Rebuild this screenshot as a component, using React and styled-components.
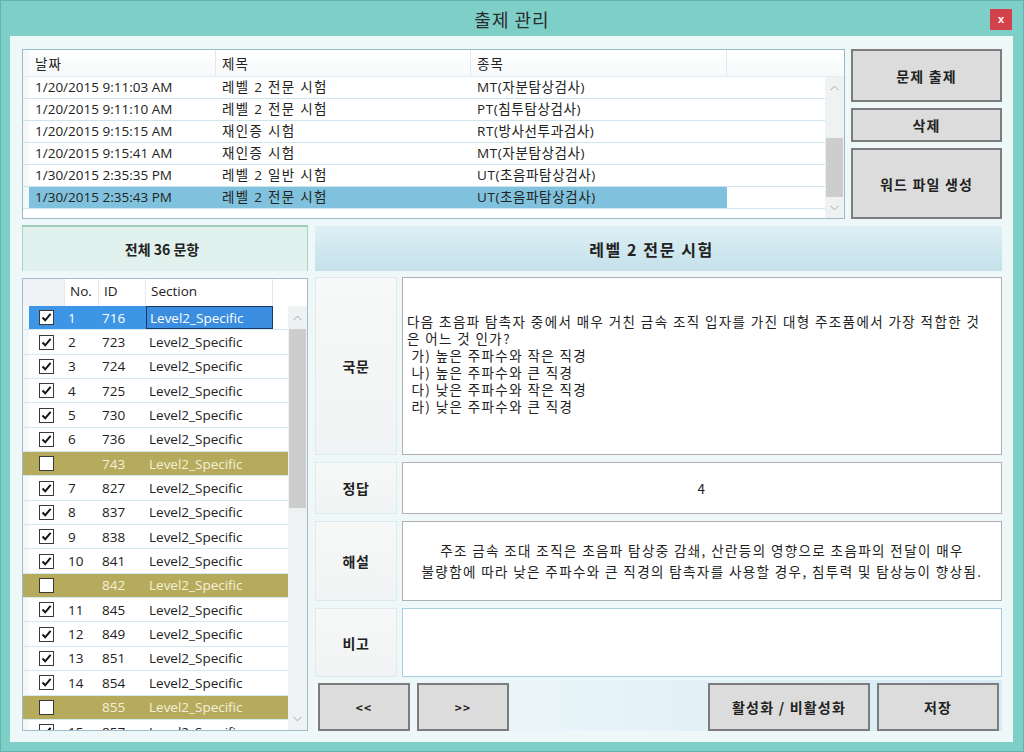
import styled, { createGlobalStyle } from "styled-components";

const exams = [
  { date: "1/20/2015 9:11:03 AM", title: "레벨 2 전문 시험", kind: "MT(자분탐상검사)" },
  { date: "1/20/2015 9:11:10 AM", title: "레벨 2 전문 시험", kind: "PT(침투탐상검사)" },
  { date: "1/20/2015 9:15:15 AM", title: "재인증 시험", kind: "RT(방사선투과검사)" },
  { date: "1/20/2015 9:15:41 AM", title: "재인증 시험", kind: "MT(자분탐상검사)" },
  { date: "1/30/2015 2:35:35 PM", title: "레벨 2 일반 시험", kind: "UT(초음파탐상검사)" },
  { date: "1/30/2015 2:35:43 PM", title: "레벨 2 전문 시험", kind: "UT(초음파탐상검사)", selected: true },
];

const questions = [
  { no: "1", id: "716", on: true, selected: true },
  { no: "2", id: "723", on: true },
  { no: "3", id: "724", on: true },
  { no: "4", id: "725", on: true },
  { no: "5", id: "730", on: true },
  { no: "6", id: "736", on: true },
  { no: "", id: "743", on: false },
  { no: "7", id: "827", on: true },
  { no: "8", id: "837", on: true },
  { no: "9", id: "838", on: true },
  { no: "10", id: "841", on: true },
  { no: "", id: "842", on: false },
  { no: "11", id: "845", on: true },
  { no: "12", id: "849", on: true },
  { no: "13", id: "851", on: true },
  { no: "14", id: "854", on: true },
  { no: "", id: "855", on: false },
  { no: "15", id: "857", on: true },
];

const questionLines = [
  "다음 초음파 탐촉자 중에서 매우 거친 금속 조직 입자를 가진 대형 주조품에서 가장 적합한 것",
  "은 어느 것 인가?",
  " 가) 높은 주파수와 작은 직경",
  " 나) 높은 주파수와 큰 직경",
  " 다) 낮은 주파수와 작은 직경",
  " 라) 낮은 주파수와 큰 직경",
];

const explainLines = [
  "주조 금속 조대 조직은 초음파 탐상중 감쇄, 산란등의 영향으로 초음파의 전달이 매우",
  "불량함에 따라 낮은 주파수와 큰 직경의 탐촉자를 사용할 경우, 침투력 및 탐상능이 향상됨.",
];

const App = () => {
  return (
    <Window>
      <GlobalStyle />
      <TitleBar>
        <span />
        <Title>출제 관리</Title>
        <CloseBtn>x</CloseBtn>
      </TitleBar>

      <Body>
        {/* top: exam list + action buttons */}
        <Top>
          <ExamList>
            <ExamHead>
              <Strip />
              <HeadCell w={187}>날짜</HeadCell>
              <HeadCell w={255}>제목</HeadCell>
              <HeadCell w={256}>종목</HeadCell>
              <HeadFill />
            </ExamHead>
            <ListBody>
              <Rows>
                {exams.map((e) => (
                  <ExamRow key={e.date}>
                    <Strip />
                    <ExamCell w={187} sel={e.selected}>{e.date}</ExamCell>
                    <ExamCell w={255} sel={e.selected} ls={1.3}>{e.title}</ExamCell>
                    <ExamCell w={256} sel={e.selected} ls={0.6}>{e.kind}</ExamCell>
                    <ExamFill />
                  </ExamRow>
                ))}
              </Rows>
              <ScrollBar>
                <Arrow h={22}><Chevron /></Arrow>
                <Track>
                  <Thumb top={39} h={59} />
                </Track>
                <Arrow h={20}><Chevron down /></Arrow>
              </ScrollBar>
            </ListBody>
          </ExamList>

          <SideButtons>
            <GrayButton h={53}>문제 출제</GrayButton>
            <GrayButton h={34}>삭제</GrayButton>
            <GrayButton h={71}>워드 파일 생성</GrayButton>
          </SideButtons>
        </Top>

        <Bottom>
          {/* left: question grid */}
          <LeftCol>
            <CountTab>전체 36 문항</CountTab>
            <Grid>
              <GridHead>
                <Strip />
                <GHeadCell w={36} shade />
                <GHeadCell w={34}>No.</GHeadCell>
                <GHeadCell w={47}>ID</GHeadCell>
                <GHeadCell w={127}>Section</GHeadCell>
                <HeadFill />
              </GridHead>
              <ListBody>
                <Rows>
                  {questions.map((q) => (
                    <QRow key={q.id} off={!q.on}>
                      <Strip />
                      <QCell w={36} center sel={q.selected}>
                        <CheckBox checked={q.on} />
                      </QCell>
                      <QCell w={34} sel={q.selected}>{q.no}</QCell>
                      <QCell w={47} sel={q.selected}>{q.id}</QCell>
                      <QCell w={127} sel={q.selected} focus={q.selected}>Level2_Specific</QCell>
                      <QFill />
                    </QRow>
                  ))}
                </Rows>
                <ScrollBar>
                  <Arrow h={23}><Chevron /></Arrow>
                  <Track>
                    <Thumb top={0} h={179} />
                  </Track>
                  <Arrow h={22}><Chevron down /></Arrow>
                </ScrollBar>
              </ListBody>
            </Grid>
          </LeftCol>

          {/* right: question detail */}
          <RightCol>
            <DetailTitle>레벨 2 전문 시험</DetailTitle>
            <Fields>
              <Field h={178}>
                <Label>국문</Label>
                <Value>
                  <TextBlock>
                    {questionLines.map((l) => (
                      <Line key={l}>{l}</Line>
                    ))}
                  </TextBlock>
                </Value>
              </Field>
              <Field h={52}>
                <Label>정답</Label>
                <Value center>4</Value>
              </Field>
              <Field h={80}>
                <Label>해설</Label>
                <Value center>
                  <TextBlock center>
                    {explainLines.map((l) => (
                      <Line key={l} tall>{l}</Line>
                    ))}
                  </TextBlock>
                </Value>
              </Field>
              <Field h={69}>
                <Label>비고</Label>
                <Value blue />
              </Field>
            </Fields>
            <ButtonStrip>
              <GrayButton w={92} small>&lt;&lt;</GrayButton>
              <GrayButton w={92} small>&gt;&gt;</GrayButton>
              <Spacer />
              <GrayButton w={162}>활성화 / 비활성화</GrayButton>
              <GrayButton w={122}>저장</GrayButton>
            </ButtonStrip>
          </RightCol>
        </Bottom>
      </Body>
    </Window>
  );
};

const CheckBox = ({ checked }) => (
  <Box>
    {checked && (
      <svg width="13" height="13" viewBox="0 0 13 13">
        <path d="M2.5 6.5 L5.2 9.3 L10.6 2.8" fill="none" stroke="#151515" strokeWidth="2" />
      </svg>
    )}
  </Box>
);

const Chevron = ({ down }) => (
  <svg width="9" height="6" viewBox="0 0 9 6">
    <polyline
      points={down ? "0.5,0.8 4.5,4.8 8.5,0.8" : "0.5,5.2 4.5,1.2 8.5,5.2"}
      fill="none"
      stroke="#a6a6a6"
      strokeWidth="1"
    />
  </svg>
);

const GlobalStyle = createGlobalStyle`
  html, body {
    margin: 0;
    padding: 0;
  }
  body {
    font-family: "Open Sans", "Noto Sans CJK KR", sans-serif;
    color: #222;
  }
  * { box-sizing: border-box; }
`;

const Window = styled.div`
  width: 1024px;
  height: 752px;
  display: flex;
  flex-direction: column;
  background: #7dcfc8;
  border: 1px solid #5db8b0;
`;

const TitleBar = styled.div`
  height: 35px;
  flex: none;
  display: grid;
  grid-template-columns: 1fr auto 1fr;
  align-items: center;
`;

const Title = styled.div`
  font-size: 18px;
  color: #2b2b2b;
  letter-spacing: 1px;
  font-family: "Noto Sans CJK KR", sans-serif;
  padding-top: 1px;
`;

const CloseBtn = styled.div`
  justify-self: end;
  margin-right: 11px;
  margin-top: 2px;
  width: 22px;
  height: 21px;
  background: #d3424a;
  color: #fff;
  font: bold 11px "Liberation Sans", sans-serif;
  display: flex;
  align-items: center;
  justify-content: center;
  padding-bottom: 2px;
`;

const Body = styled.div`
  flex: 1;
  min-height: 0;
  margin: 0 10px 9px 9px;
  background: #eef8f8;
  padding: 13px 11px 11px 12px;
  display: flex;
  flex-direction: column;
`;

const Top = styled.div`
  height: 170px;
  flex: none;
  display: flex;
  gap: 6px;
`;

const ExamList = styled.div`
  flex: 1;
  background: #fff;
  border: 1px solid #9db8c7;
  display: flex;
  flex-direction: column;
`;

const ExamHead = styled.div`
  height: 27px;
  flex: none;
  display: flex;
  background: linear-gradient(#ffffff, #f6f9fa);
  border-bottom: 1px solid #e3eef2;
`;

const Strip = styled.div`
  width: 6px;
  flex: none;
  background: #f3f7f8;
`;

const HeadCell = styled.div`
  width: ${(p) => p.w}px;
  flex: none;
  padding: 3px 0 0 6px;
  font-size: 13.5px;
  letter-spacing: 1px;
  border-right: 1px solid #e4e8ea;
  color: #222;
`;

const HeadFill = styled.div`
  flex: 1;
`;

const ListBody = styled.div`
  flex: 1;
  min-height: 0;
  display: flex;
`;

const Rows = styled.div`
  flex: 1;
  overflow: hidden;
  background: #fff;
`;

const ExamRow = styled.div`
  height: 22px;
  display: flex;
  border-bottom: 1px solid #cde6ee;
`;

const ExamCell = styled.div`
  width: ${(p) => p.w}px;
  flex: none;
  padding-left: 6px;
  font-size: 13.5px;
  line-height: 21px;
  letter-spacing: ${(p) => p.ls || 0}px;
  white-space: nowrap;
  background: ${(p) => (p.sel ? "#80c2dd" : "#fff")};
`;

const ExamFill = styled.div`
  flex: 1;
  background: #fff;
`;

const ScrollBar = styled.div`
  width: 19px;
  flex: none;
  display: flex;
  flex-direction: column;
  background: #eff2f3;
`;

const Arrow = styled.div`
  height: ${(p) => p.h}px;
  flex: none;
  display: flex;
  align-items: center;
  justify-content: center;
`;

const Track = styled.div`
  flex: 1;
  display: flex;
  flex-direction: column;
`;

const Thumb = styled.div`
  margin: ${(p) => p.top}px 1px 0 1px;
  height: ${(p) => p.h}px;
  background: #cdcdcd;
`;

const SideButtons = styled.div`
  width: 151px;
  display: flex;
  flex-direction: column;
  gap: 6px;
`;

const GrayButton = styled.div`
  height: ${(p) => (p.h ? `${p.h}px` : "auto")};
  width: ${(p) => (p.w ? `${p.w}px` : "auto")};
  flex: none;
  background: #dcdcdc;
  border: 2px solid #7c7c7c;
  display: flex;
  align-items: center;
  justify-content: center;
  font-family: "Noto Sans CJK KR", sans-serif;
  font-weight: 700;
  font-size: ${(p) => (p.small ? "12px" : "14px")};
  letter-spacing: 1.2px;
  color: #222;
`;

const Bottom = styled.div`
  flex: 1;
  min-height: 0;
  margin-top: 6px;
  display: flex;
  gap: 7px;
`;

const LeftCol = styled.div`
  width: 286px;
  display: flex;
  flex-direction: column;
  gap: 7px;
`;

const CountTab = styled.div`
  height: 46px;
  flex: none;
  background: #e1f1ee;
  border: 1px solid #a8d2c2;
  border-bottom: none;
  border-top: 2px solid #9fcbb6;
  display: flex;
  align-items: center;
  justify-content: center;
  padding-right: 6px;
  font-family: "Noto Sans CJK KR", sans-serif;
  font-weight: 700;
  font-size: 14px;
`;

const Grid = styled.div`
  flex: 1;
  min-height: 0;
  background: #fff;
  border: 1px solid #a3bccb;
  display: flex;
  flex-direction: column;
`;

const GridHead = styled.div`
  height: 27px;
  flex: none;
  display: flex;
  background: #fff;
  & > ${Strip} {
    background: #eef2f4;
  }
`;

const GHeadCell = styled.div`
  width: ${(p) => p.w}px;
  flex: none;
  padding: 3px 0 0 5px;
  font-size: 13.5px;
  background: ${(p) => (p.shade ? "#eef2f4" : "#fff")};
  border-right: 1px solid #e6e9eb;
`;

const QRow = styled.div`
  height: 24.35px;
  display: flex;
  border-bottom: 1px solid #d5e9f1;
  background: ${(p) => (p.off ? "#b6ab5d" : "#fff")};
  color: ${(p) => (p.off ? "#f4f0d8" : "#222")};
  & > ${Strip} {
    background: ${(p) => (p.off ? "#b6ab5d" : "#f3f7f8")};
  }
`;

const QCell = styled.div`
  width: ${(p) => p.w}px;
  flex: none;
  display: flex;
  align-items: center;
  justify-content: ${(p) => (p.center ? "center" : "flex-start")};
  padding-left: ${(p) => (p.center ? 0 : 3)}px;
  font-size: 13.5px;
  white-space: nowrap;
  background: ${(p) => (p.focus ? "#3a8ddf" : p.sel ? "#3d95e6" : "transparent")};
  color: ${(p) => (p.sel ? "#fff" : "inherit")};
  border: ${(p) => (p.focus ? "1px solid #1b3863" : "none")};
`;

const QFill = styled.div`
  flex: 1;
`;

const Box = styled.div`
  width: 15px;
  height: 15px;
  margin-left: -1px;
  background: #fff;
  border: 1px solid #3a3a3a;
  display: flex;
  align-items: center;
  justify-content: center;
`;

const RightCol = styled.div`
  flex: 1;
  display: flex;
  flex-direction: column;
`;

const DetailTitle = styled.div`
  height: 45px;
  margin-top: 1px;
  flex: none;
  background: linear-gradient(180deg, #ddf0f5 0%, #c5e0ea 100%);
  display: flex;
  align-items: center;
  justify-content: center;
  padding-right: 14px;
  font-family: "Noto Sans CJK KR", sans-serif;
  font-weight: 700;
  font-size: 16px;
  letter-spacing: 1.6px;
  color: #222;
`;

const Fields = styled.div`
  margin-top: 6px;
  flex: none;
  display: flex;
  flex-direction: column;
  gap: 7px;
`;

const Field = styled.div`
  height: ${(p) => p.h}px;
  display: grid;
  grid-template-columns: 82px 1fr;
  gap: 5px;
`;

const Label = styled.div`
  background: linear-gradient(180deg, #f7f8f8, #f1f4f4);
  border: 1px solid #e0eaee;
  display: flex;
  align-items: center;
  justify-content: center;
  font-family: "Noto Sans CJK KR", sans-serif;
  font-weight: 700;
  font-size: 14px;
  letter-spacing: 0.5px;
`;

const Value = styled.div`
  background: #fff;
  border: 1px solid ${(p) => (p.blue ? "#a6cde0" : "#b0b0b0")};
  display: flex;
  align-items: center;
  justify-content: ${(p) => (p.center ? "center" : "flex-start")};
  padding: 0 4px;
  font-family: "Noto Sans CJK KR", sans-serif;
  font-size: 13.5px;
  letter-spacing: 1.4px;
`;

const TextBlock = styled.div`
  text-align: ${(p) => (p.center ? "center" : "left")};
  margin-top: ${(p) => (p.center ? 0 : -4)}px;
`;

const Line = styled.div`
  white-space: pre;
  line-height: ${(p) => (p.tall ? 21 : 17)}px;
`;

const ButtonStrip = styled.div`
  flex: 1;
  margin-top: 3px;
  display: flex;
  gap: 7px;
  padding: 3px 3px 0 3px;
  background: linear-gradient(90deg, #f2f9fb 0%, #d6ebf3 100%);
`;

const Spacer = styled.div`
  flex: 1;
`;

export default App;
